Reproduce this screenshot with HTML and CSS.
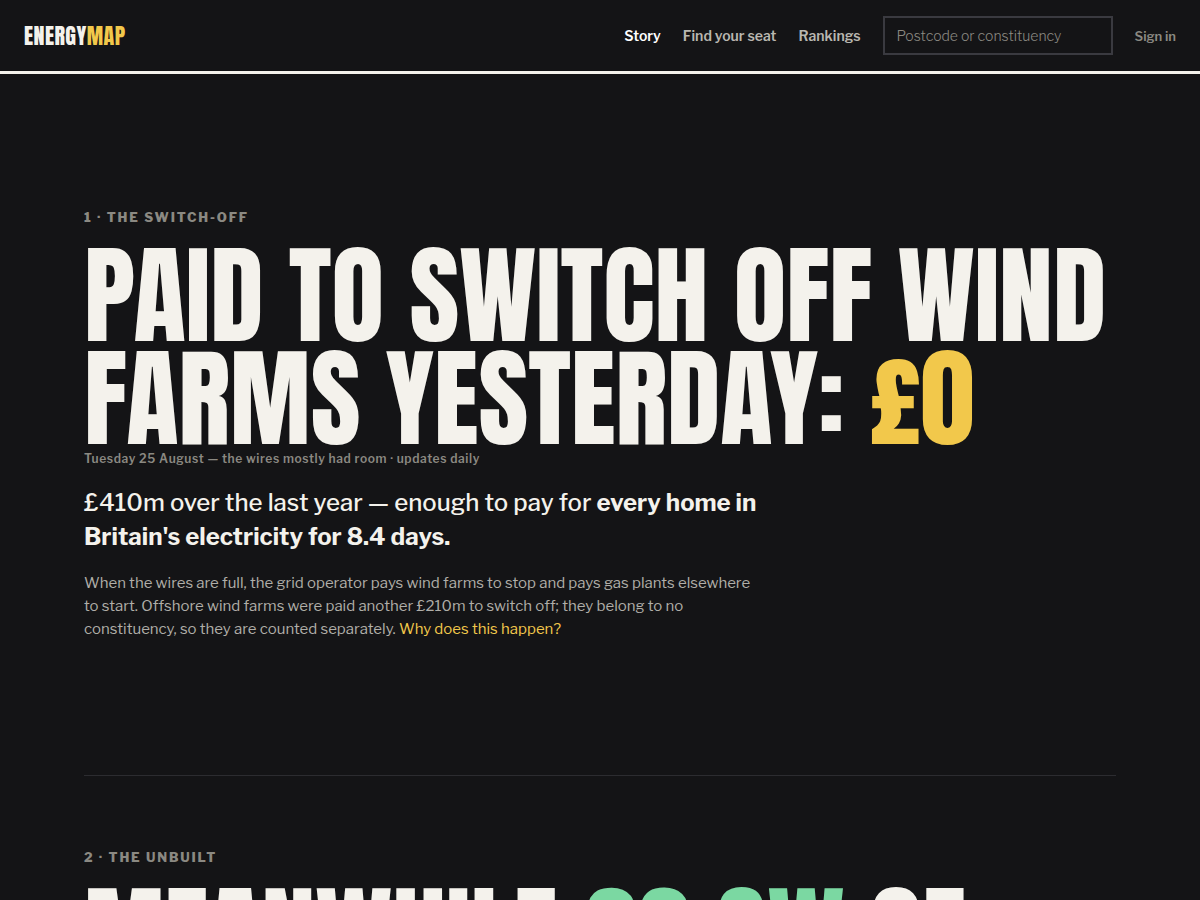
FILE: index.html
```html
<!DOCTYPE html>
<html lang="en">
<head>
<meta charset="utf-8">
<meta name="viewport" content="width=device-width, initial-scale=1">
<title>Energymap</title>
<link rel="stylesheet" href="styles.css">
</head>
<body>
<header class="site-header">
  <a class="logo" href="#">ENERGY<span class="logo-accent">MAP</span></a>
  <nav class="nav" aria-label="Main">
    <a class="nav-link is-active" href="#story" aria-current="page">Story</a>
    <a class="nav-link" href="#seat">Find your seat</a>
    <a class="nav-link" href="#rankings">Rankings</a>
    <input class="search" type="search" placeholder="Postcode or constituency" aria-label="Postcode or constituency">
    <a class="sign-in" href="#signin">Sign in</a>
  </nav>
</header>
<main class="story" id="story">
  <section class="chapter chapter-intro">
    <p class="kicker">1 · The switch-off</p>
    <h1 class="headline">Paid to switch off wind farms yesterday: <span class="gold">£0</span></h1>
    <p class="dateline">Tuesday 25 August — the wires mostly had room · updates daily</p>
    <p class="lede">£410m over the last year — enough to pay for <strong>every home in Britain's electricity for 8.4 days.</strong></p>
    <p class="detail">When the wires are full, the grid operator pays wind farms to stop and pays gas plants elsewhere to start. Offshore wind farms were paid another £210m to switch off; they belong to no constituency, so they are counted separately. <a class="gold" href="#why">Why does this happen?</a></p>
  </section>
  <section class="chapter">
    <p class="kicker">2 · The unbuilt</p>
    <h2 class="headline">Meanwhile <span class="green">62 GW</span> of</h2>
  </section>
</main>
</body>
</html>
```
FILE: styles.css
```css
* { box-sizing: border-box; }

body {
  margin: 0;
  background: #141416;
  color: #f4f2ec;
  font-family: "Libre Franklin", "Open Sans", sans-serif;
  font-size: 15px;
}

a { color: inherit; text-decoration: none; }
p, h1, h2 { margin: 0; }

.site-header {
  display: flex;
  align-items: center;
  justify-content: space-between;
  padding: 16px 24px;
  border-bottom: 3px solid #f4f2ec;
}

.logo {
  font-family: Anton, "Liberation Sans Narrow", "Liberation Sans", sans-serif;
  font-size: 22px;
  font-weight: 400;
  line-height: 24px;
  letter-spacing: 0.02em;
}

.logo-accent, .gold { color: #f2c84b; }
.green { color: #7bd8a2; }

.nav {
  display: flex;
  align-items: center;
  gap: 22px;
}

.nav-link { font-size: 14px; font-weight: 600; color: #b9b7b0; }
.nav-link.is-active { color: #fff; }
.sign-in { font-size: 13px; font-weight: 600; color: #8b8982; }

.search {
  width: 230px;
  height: 39px;
  padding: 0 12px;
  border: 2px solid #3a3a40;
  border-radius: 0;
  background: transparent;
  color: #f4f2ec;
  font-family: inherit;
  font-size: 14px;
  font-weight: 300;
  appearance: none;
}
.search::placeholder { color: #8b8982; opacity: 1; }

.story {
  max-width: 1080px;
  margin: 0 auto;
  padding: 0 24px;
}

.chapter {
  display: flex;
  flex-direction: column;
  padding: 72px 0;
}

.chapter-intro {
  justify-content: center;
  min-height: 78vh;
  border-bottom: 1px solid #2c2c30;
}

.kicker {
  margin-bottom: 18px;
  color: #8b8982;
  font-size: 13px;
  font-weight: 800;
  line-height: 18px;
  letter-spacing: 0.14em;
  text-transform: uppercase;
}

.headline {
  font-family: Anton, "Liberation Sans Narrow", "Liberation Sans", sans-serif;
  font-size: 108px;
  font-weight: 400;
  line-height: 103px;
  text-transform: uppercase;
}

.dateline {
  color: #8b8982;
  font-size: 12px;
  font-weight: 600;
  line-height: 18px;
  letter-spacing: 0.05em;
}

.lede {
  max-width: 700px;
  margin-top: 18px;
  font-size: 24px;
  font-weight: 500;
  line-height: 34px;
}

.lede strong { font-weight: 700; }

.detail {
  max-width: 680px;
  margin-top: 18px;
  color: #b0aea8;
  font-weight: 400;
  line-height: 23px;
}
```
